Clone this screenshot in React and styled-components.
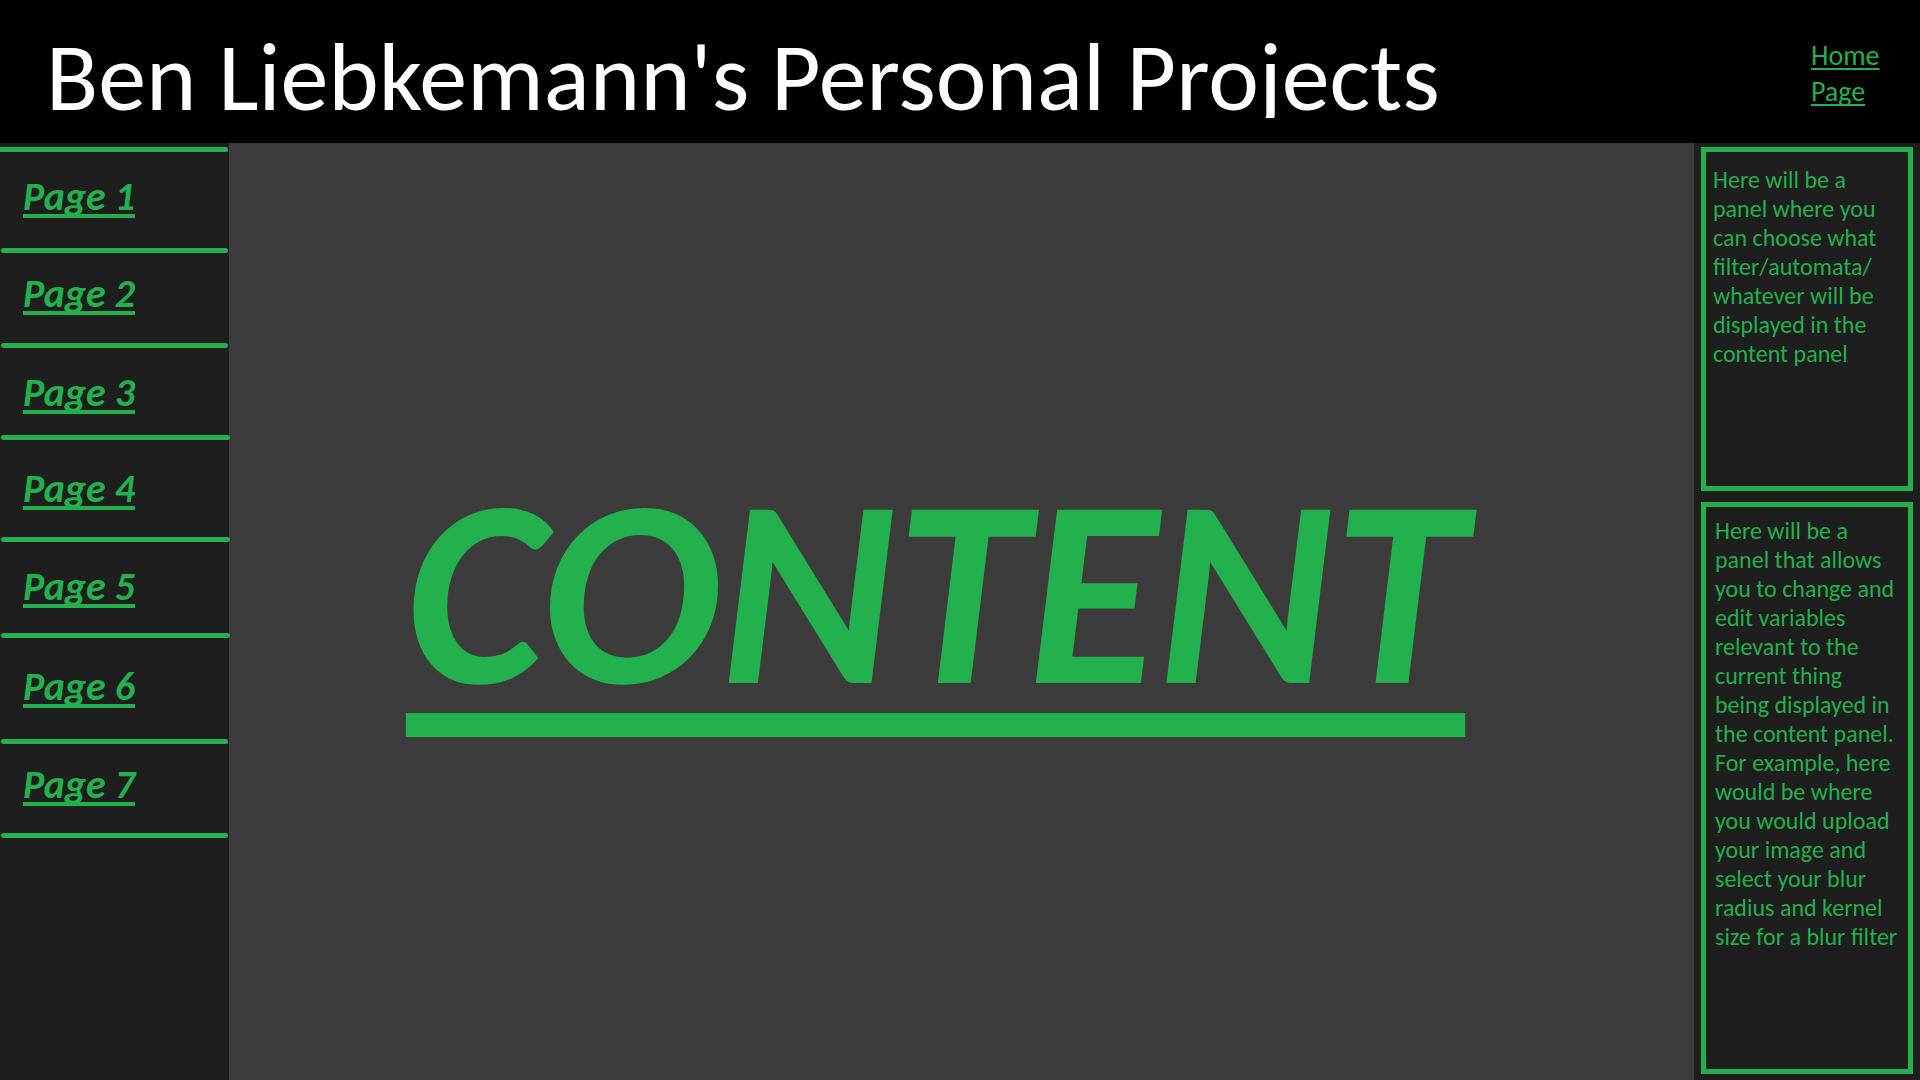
import React from "react";
import styled, { createGlobalStyle } from "styled-components";

const green = "#22b14c";

const GlobalStyle = createGlobalStyle`
  *, *::before, *::after { box-sizing: border-box; }
  body {
    margin: 0;
    background: #3c3c3c;
    color: ${green};
    font-family: Calibri, Carlito, Lato, sans-serif;
  }
`;

const Page = styled.div`
  min-height: 100vh;
  display: grid;
  grid-template-rows: auto 1fr;
`;

const Header = styled.header`
  display: flex;
  justify-content: space-between;
  align-items: flex-start;
  padding: 38px 0 25px 46px;
  background: #000;
`;

const Title = styled.h1`
  margin: 0;
  color: #fff;
  font-size: 96px;
  font-weight: 400;
  line-height: 80px;
  overflow-y: clip;
`;

const HomeLink = styled.a`
  width: 109px;
  padding-right: 30px;
  color: inherit;
  font-size: 28px;
  line-height: 36px;
  text-decoration: underline 2px;
  text-underline-offset: 3px;
  text-decoration-skip-ink: none;
`;

const Body = styled.div`
  display: grid;
  grid-template-columns: 229px 1fr 226px;
`;

const Sidebar = styled.nav`
  padding-top: 4px;
  background: #1e1e1e;
`;

const NavList = styled.ul`
  margin: 0;
  padding: 0;
  list-style: none;

  &::before {
    content: "";
    display: block;
    height: 5px;
    margin-right: 1px;
    border-radius: 0 3px 3px 0;
    background: ${green};
  }
`;

const leads = { tight: 18, normal: 22, loose: 26 };

const NavItem = styled.li`
  display: flex;
  flex-direction: column;
  align-items: flex-start;
  justify-content: space-between;
  height: ${(p) => p.$height}px;
  padding-top: ${(p) => leads[p.$lead]}px;

  &::after {
    content: "";
    position: relative;
    align-self: stretch;
    height: 5px;
    margin: 0 ${(p) => (p.$wide ? -1 : 1)}px 0 1px;
    border-radius: 3px;
    background: ${green};
  }
`;

const NavLink = styled.a`
  margin-left: 23px;
  color: inherit;
  font-size: 40px;
  font-style: italic;
  font-weight: 700;
  line-height: 46px;
  text-decoration: underline 4px;
  text-underline-offset: 4px;
  text-decoration-skip-ink: none;
`;

const Main = styled.main`
  display: flex;
  align-items: center;
  justify-content: center;
  padding: 0 52px 40px 0;
`;

const ContentHeading = styled.h2`
  margin: 0;
  font-size: 267px;
  font-style: italic;
  font-weight: 700;
  line-height: 320px;
  text-decoration: underline 24px;
  text-underline-offset: 30px;
  text-decoration-skip-ink: none;
`;

const Tools = styled.aside`
  display: grid;
  grid-template-rows: 3fr 5fr;
  gap: 11px;
  padding: 4px 7px 6px;
  background: #1e1e1e;
`;

const Panel = styled.section`
  padding: ${(p) => p.$inset};
  border: 5px solid ${green};
`;

const PanelText = styled.p`
  margin: 0;
  font-size: 24px;
  line-height: 29px;
`;

const pages = [
  { name: "Page 1", height: 101, lead: "normal" },
  { name: "Page 2", height: 95, lead: "tight" },
  { name: "Page 3", height: 92, lead: "normal", wide: true },
  { name: "Page 4", height: 102, lead: "loose", wide: true },
  { name: "Page 5", height: 96, lead: "normal", wide: true },
  { name: "Page 6", height: 106, lead: "loose" },
  { name: "Page 7", height: 94, lead: "tight" },
];

export default function App() {
  return (
    <Page>
      <GlobalStyle />
      <Header>
        <Title>Ben Liebkemann's Personal Projects</Title>
        <HomeLink href="#home">Home Page</HomeLink>
      </Header>
      <Body>
        <Sidebar>
          <NavList>
            {pages.map((page, i) => (
              <NavItem key={page.name} $height={page.height} $lead={page.lead} $wide={page.wide}>
                <NavLink href={`#page-${i + 1}`}>{page.name}</NavLink>
              </NavItem>
            ))}
          </NavList>
        </Sidebar>
        <Main>
          <ContentHeading>CONTENT</ContentHeading>
        </Main>
        <Tools>
          <Panel $inset="13px 19px 13px 7px">
            <PanelText>
              Here will be a panel where you can choose what filter/automata/<wbr />whatever will be
              displayed in the content panel
            </PanelText>
          </Panel>
          <Panel $inset="9px 9px 9px 9px">
            <PanelText>
              Here will be a panel that allows you to change and edit variables relevant to the
              current thing being displayed in the content panel. For example, here would be where
              you would upload your image and select your blur radius and kernel size for a blur
              filter
            </PanelText>
          </Panel>
        </Tools>
      </Body>
    </Page>
  );
}
